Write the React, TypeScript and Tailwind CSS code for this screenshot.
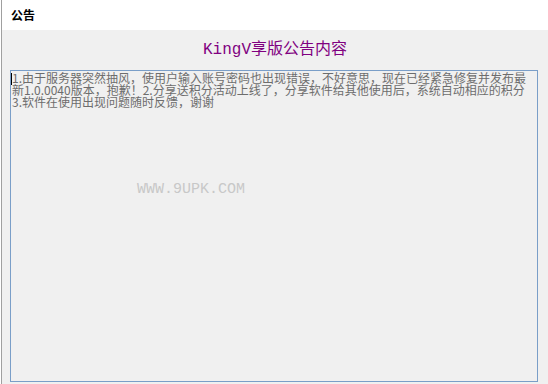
import React from "react";

const lines = [
    "1.由于服务器突然抽风，使用户输入账号密码也出现错误，不好意思，现在已经紧急修复并发布最",
    "新1.0.0040版本，抱歉！2.分享送积分活动上线了，分享软件给其他使用后，系统自动相应的积分",
    "3.软件在使用出现问题随时反馈，谢谢",
];

const cjk = { fontFamily: '"Noto Sans CJK SC", "Noto Sans", sans-serif' };
const mono = { fontFamily: '"Liberation Mono", "Noto Sans CJK SC", monospace' };

const App: React.FC = () => {
    return (
        <div className="w-[548px] h-[384px] flex bg-white overflow-hidden">
            <div className="w-px bg-white" />
            <div className="w-px bg-[#a0a0a0]" />
            <div className="flex-1 flex flex-col">
                {/* Header */}
                <div
                    className="h-[30px] bg-white flex items-center pl-[9px] text-[12px] font-bold text-black"
                    style={cjk}
                >
                    公告
                </div>

                <div className="flex-1 bg-[#f0f0f0] flex flex-col">
                    <div
                        className="h-[40px] flex items-center justify-center text-[16px] text-[#800080] leading-none"
                        style={mono}
                    >
                        KingV享版公告内容
                    </div>

                    {/* Notice box */}
                    <div className="relative ml-[8px] mr-[10px] h-[312px] border border-[#7a9ec8] bg-[#f0f0f0] overflow-hidden">
                        <div
                            className="pl-px pt-px text-[12px] leading-[12px] text-[#6d6d6d]"
                            style={cjk}
                        >
                            {lines.map((line, i) => (
                                <div key={i} className="whitespace-nowrap">
                                    {line}
                                </div>
                            ))}
                        </div>
                        <div className="absolute left-0 top-[2px] w-px h-[12px] bg-black" />
                        <div
                            className="absolute left-[126px] top-[111px] text-[15px] leading-none text-[#c8c8c8]"
                            style={mono}
                        >
                            WWW.9UPK.COM
                        </div>
                    </div>
                </div>
            </div>
        </div>
    );
};

export default App;
